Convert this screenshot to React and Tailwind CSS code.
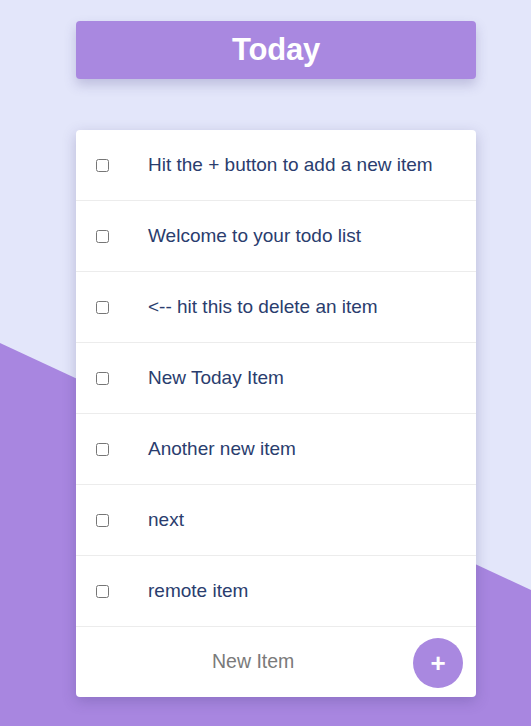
import React from 'react';

const items = [
  'Hit the + button to add a new item',
  'Welcome to your todo list',
  '<-- hit this to delete an item',
  'New Today Item',
  'Another new item',
  'next',
  'remote item',
];

export default function App() {
  return (
    <div className="relative min-h-[726px] overflow-hidden bg-[#e3e6fa]" style={{ fontFamily: '"Liberation Sans", Arial, sans-serif' }}>
      {/* diagonal backdrop */}
      <svg className="absolute inset-0 h-full w-full" viewBox="0 0 531 726" preserveAspectRatio="none">
        <polygon points="0,343 531,590 531,726 0,726" fill="#a886e0" />
      </svg>

      <div className="relative flex flex-col pl-[76px] pt-[21px]">
        <div className="flex h-[58px] w-[400px] items-center justify-center rounded-[4px] bg-[#a988e0] shadow-[0_6px_12px_rgba(80,70,140,0.25)]">
          <h1 className="text-[31px] font-bold tracking-[-0.2px] text-white">Today</h1>
        </div>

        <div className="mt-[51px] w-[400px] overflow-hidden rounded-[4px] bg-white shadow-[0_4px_14px_rgba(60,50,110,0.25)]">
          {items.map((item, i) => (
            <div key={i} className="flex h-[71px] items-center border-b border-[#ececec]">
              <input type="checkbox" className="ml-[20px] h-[13px] w-[13px]" />
              <span className="ml-[39px] text-[19px] text-[#2a3d6e]">{item}</span>
            </div>
          ))}
          <div className="relative flex h-[70px] items-center">
            <span className="ml-[136px] text-[19.5px] text-[#7a7a7a]">New Item</span>
            <button className="absolute right-[13px] top-[11px] flex h-[50px] w-[50px] items-center justify-center rounded-full bg-[#a988e0] text-[26px] font-bold leading-none text-white">
              +
            </button>
          </div>
        </div>
      </div>
    </div>
  );
}
